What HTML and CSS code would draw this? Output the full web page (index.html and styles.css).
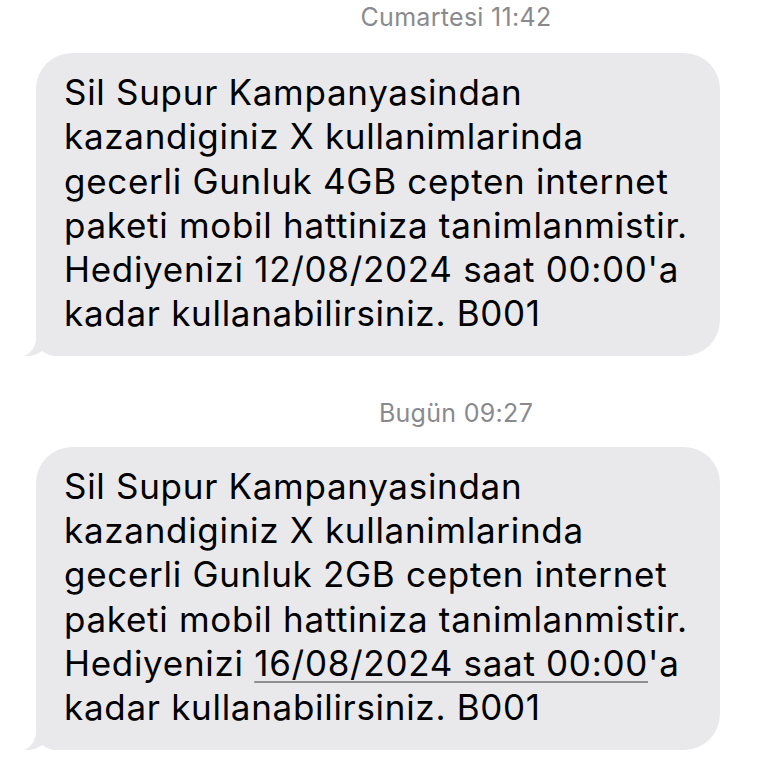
FILE: index.html
```html
<!DOCTYPE html>
<html lang="tr">
<head>
    <meta charset="UTF-8">
    <meta name="viewport" content="width=device-width, initial-scale=1.0">
    <title>Mesajlar</title>
    <link rel="stylesheet" href="styles.css">
</head>
<body>
    <div class="thread">
        <div class="stamp">Cumartesi 11:42</div>
        <div class="bubble">
            <p class="text">Sil Supur Kampanyasindan<br>kazandiginiz X kullanimlarinda<br>gecerli Gunluk 4GB cepten internet<br>paketi mobil hattiniza tanimlanmistir.<br>Hediyenizi 12/08/2024 saat 00:00'a<br>kadar kullanabilirsiniz. B001</p>
            <svg class="tail" viewBox="0 0 40 30" width="40" height="30">
                <path d="M12 0 L12 12 C12 21 7 27 0 30 C7 30.5 13 28.5 18 25 C24 28.5 30 30 40 30 L40 0 Z"/>
            </svg>
        </div>

        <div class="stamp stamp-gap">Bugün 09:27</div>
        <div class="bubble">
            <p class="text">Sil Supur Kampanyasindan<br>kazandiginiz X kullanimlarinda<br>gecerli Gunluk 2GB cepten internet<br>paketi mobil hattiniza tanimlanmistir.<br>Hediyenizi <span class="link">16/08/2024 saat 00:00</span>'a<br>kadar kullanabilirsiniz. B001</p>
            <svg class="tail" viewBox="0 0 40 30" width="40" height="30">
                <path d="M12 0 L12 12 C12 21 7 27 0 30 C7 30.5 13 28.5 18 25 C24 28.5 30 30 40 30 L40 0 Z"/>
            </svg>
        </div>
    </div>
</body>
</html>
```

FILE: styles.css
```css
body {
    margin: 0;
    background: #fff;
    font-family: Inter, "Liberation Sans", Arial, sans-serif;
}

.thread {
    display: flex;
    flex-direction: column;
}

.stamp {
    padding-left: 144px;
    text-align: center;
    font-size: 25px;
    letter-spacing: 0.3px;
    line-height: 34px;
    color: #8a8a8e;
    margin-bottom: 19px;
}

.stamp-gap {
    margin-top: 40px;
    margin-bottom: 17px;
}

.bubble {
    position: relative;
    width: 684px;
    margin-left: 36px;
    box-sizing: border-box;
    padding: 17px 20px 20px 28px;
    background: #e9e9eb;
    border-radius: 36px 36px 36px 20px;
}

.text {
    margin: 0;
    font-size: 35px;
    letter-spacing: 0.7px;
    line-height: 44.3px;
    color: #000;
    white-space: nowrap;
}

.link {
    text-decoration: underline;
    text-decoration-color: #8e8e93;
    text-decoration-thickness: 1.5px;
    text-underline-offset: 5px;
}

.tail {
    position: absolute;
    left: -12px;
    bottom: 0;
    fill: #e9e9eb;
}
```
